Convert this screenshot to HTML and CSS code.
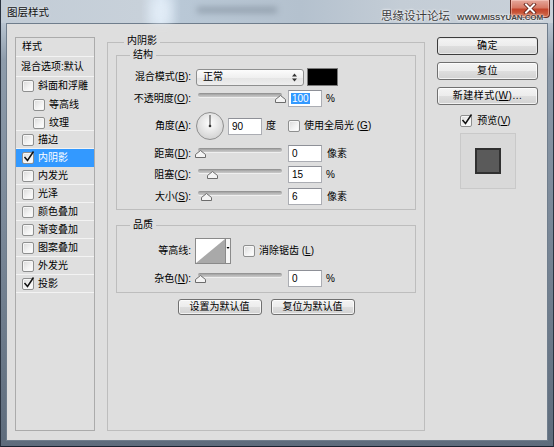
FILE: index.html
```html
<!DOCTYPE html>
<html>
<head>
<meta charset="utf-8">
<title>图层样式</title>
<link rel="stylesheet" href="styles.css">
</head>
<body>
<div class="window">
  <div class="titlebar">
    <span class="title">图层样式</span>
    <span class="glass-glow"></span>
    <span class="glass-blur"></span>
    <span class="close">
      <svg width="14" height="11" viewBox="0 0 14 11"><path d="M3 1.5 L11 9.5 M11 1.5 L3 9.5" stroke="#5b1a12" stroke-width="3.6" stroke-linecap="square"/><path d="M3 1.5 L11 9.5 M11 1.5 L3 9.5" stroke="#fff" stroke-width="2" stroke-linecap="square"/></svg>
    </span>
    <div class="watermark"><span class="wm-cn">思缘设计论坛</span><span class="wm-url">WWW.MISSYUAN.COM</span></div>
  </div>
  <div class="client">
    <div class="stylelist">
      <div class="list-head">样式</div>
      <div class="list-head second">混合选项:默认</div>
      <div class="item nosep"><span class="cb"></span>斜面和浮雕</div>
      <div class="item sub nosep"><span class="cb"></span>等高线</div>
      <div class="item sub"><span class="cb"></span>纹理</div>
      <div class="item"><span class="cb"></span>描边</div>
      <div class="item sel"><span class="cb"><svg class="tick" width="14" height="14" viewBox="0 0 14 14"><path d="M2.5 7 L5.5 10.5 L11.5 1.5" fill="none" stroke="#111" stroke-width="1.5"/></svg></span>内阴影</div>
      <div class="item"><span class="cb"></span>内发光</div>
      <div class="item"><span class="cb"></span>光泽</div>
      <div class="item"><span class="cb"></span>颜色叠加</div>
      <div class="item"><span class="cb"></span>渐变叠加</div>
      <div class="item"><span class="cb"></span>图案叠加</div>
      <div class="item"><span class="cb"></span>外发光</div>
      <div class="item"><span class="cb"><svg class="tick" width="14" height="14" viewBox="0 0 14 14"><path d="M2.5 7 L5.5 10.5 L11.5 1.5" fill="none" stroke="#111" stroke-width="1.5"/></svg></span>投影</div>
    </div>

    <fieldset class="group main">
      <legend>内阴影</legend>
      <fieldset class="group sub structure">
        <legend>结构</legend>
        <div class="row r-blend">
          <span class="lbl">混合模式(<u>B</u>):</span>
          <span class="select">正常
            <svg class="updown" width="5" height="9" viewBox="0 0 5 9"><path d="M0 3.5 L2.5 0.5 L5 3.5 Z M0 5.5 L2.5 8.5 L5 5.5 Z" fill="#333"/></svg>
          </span>
          <span class="swatch"></span>
        </div>
        <div class="row r-opacity">
          <span class="lbl">不透明度(<u>O</u>):</span>
          <span class="slider"><span class="track"></span><svg class="thumb" style="left:79px" width="11" height="8" viewBox="0 0 11 8"><path d="M5.5 0.5 L10.5 4.5 L10.5 7.5 L0.5 7.5 L0.5 4.5 Z" fill="#f4f4f4" stroke="#6c6c6c"/></svg></span>
          <span class="field"><span class="hl">100</span></span>
          <span class="unit pct">%</span>
        </div>
        <div class="row r-angle">
          <span class="lbl">角度(<u>A</u>):</span>
          <svg class="dial" width="28" height="28" viewBox="0 0 28 28">
            <defs><radialGradient id="dg" cx="50%" cy="40%" r="60%"><stop offset="0" stop-color="#ffffff"/><stop offset="1" stop-color="#d2d2d2"/></radialGradient></defs>
            <circle cx="14" cy="14" r="13.5" fill="url(#dg)" stroke="#8f8f8f"/>
            <line x1="14" y1="14" x2="14" y2="3" stroke="#3a3a3a" stroke-width="1"/>
            <circle cx="14" cy="14" r="1.3" fill="#333"/>
          </svg>
          <span class="field angle">90</span>
          <span class="unit deg">度</span>
          <span class="cb gl"></span>
          <span class="cblabel">使用全局光 (<u>G</u>)</span>
        </div>
        <div class="row r-dist">
          <span class="lbl">距离(<u>D</u>):</span>
          <span class="slider"><span class="track"></span><svg class="thumb" style="left:-1px" width="11" height="8" viewBox="0 0 11 8"><path d="M5.5 0.5 L10.5 4.5 L10.5 7.5 L0.5 7.5 L0.5 4.5 Z" fill="#f4f4f4" stroke="#6c6c6c"/></svg></span>
          <span class="field">0</span>
          <span class="unit px">像素</span>
        </div>
        <div class="row r-choke">
          <span class="lbl">阻塞(<u>C</u>):</span>
          <span class="slider"><span class="track"></span><svg class="thumb" style="left:11px" width="11" height="8" viewBox="0 0 11 8"><path d="M5.5 0.5 L10.5 4.5 L10.5 7.5 L0.5 7.5 L0.5 4.5 Z" fill="#f4f4f4" stroke="#6c6c6c"/></svg></span>
          <span class="field">15</span>
          <span class="unit pct">%</span>
        </div>
        <div class="row r-size">
          <span class="lbl">大小(<u>S</u>):</span>
          <span class="slider"><span class="track"></span><svg class="thumb" style="left:5px" width="11" height="8" viewBox="0 0 11 8"><path d="M5.5 0.5 L10.5 4.5 L10.5 7.5 L0.5 7.5 L0.5 4.5 Z" fill="#f4f4f4" stroke="#6c6c6c"/></svg></span>
          <span class="field">6</span>
          <span class="unit px">像素</span>
        </div>
      </fieldset>

      <fieldset class="group sub quality">
        <legend>品质</legend>
        <div class="row r-contour">
          <span class="lbl">等高线:</span>
          <svg class="contour" width="36" height="26" viewBox="0 0 36 26">
            <rect x="0.5" y="0.5" width="30" height="25" fill="#fff" stroke="#8a8a8a"/>
            <path d="M1 25 L30 1 L30 25 Z" fill="#a9a9a9"/>
            <rect x="30.5" y="0.5" width="5" height="25" fill="#f6f6f6" stroke="#8a8a8a"/>
            <path d="M31.5 9 L34.5 9 L33 11 Z" fill="#000"/>
          </svg>
          <span class="cb aa"></span>
          <span class="cblabel">消除锯齿 (<u>L</u>)</span>
        </div>
        <div class="row r-noise">
          <span class="lbl">杂色(<u>N</u>):</span>
          <span class="slider"><span class="track"></span><svg class="thumb" style="left:-1px" width="11" height="8" viewBox="0 0 11 8"><path d="M5.5 0.5 L10.5 4.5 L10.5 7.5 L0.5 7.5 L0.5 4.5 Z" fill="#f4f4f4" stroke="#6c6c6c"/></svg></span>
          <span class="field">0</span>
          <span class="unit pct">%</span>
        </div>
      </fieldset>

      <div class="defaults">
        <span class="btn small">设置为默认值</span>
        <span class="btn small">复位为默认值</span>
      </div>
    </fieldset>

    <div class="side">
      <span class="btn big default">确定</span>
      <span class="btn big">复位</span>
      <span class="btn big">新建样式(<u>W</u>)...</span>
      <div class="preview-check">
        <span class="cb"><svg class="tick" width="14" height="14" viewBox="0 0 14 14"><path d="M2.5 7 L5.5 10.5 L11.5 1.5" fill="none" stroke="#111" stroke-width="1.5"/></svg></span>
        <span class="cblabel">预览(<u>V</u>)</span>
      </div>
      <div class="preview"><span class="preview-swatch"></span></div>
    </div>
  </div>
</div>
</body>
</html>
```

FILE: styles.css
```css
* { box-sizing: border-box; }
html, body { margin: 0; padding: 0; }
body {
  width: 554px;
  height: 447px;
  overflow: hidden;
  font-family: "Liberation Sans", "Noto Sans CJK SC", sans-serif;
  font-size: 10px;
  line-height: 12px;
  color: #000;
  background: #fff;
}
u { text-decoration: underline; text-underline-offset: 1px; }

.window {
  width: 554px;
  height: 447px;
  display: flex;
  flex-direction: column;
  border-left: 1px solid #2a3340;
  border-right: 1px solid #2a3340;
  border-bottom: 1px solid #1a2230;
  background: linear-gradient(to bottom, #c4cdd7 0, #b9c5d1 23px, #8e9cab 60px, #7d8b9b 200px, #5e6c7c 100%);
}

/* title bar */
.titlebar {
  height: 23px;
  flex: none;
  display: flex;
  align-items: flex-start;
  position: relative;
  background: linear-gradient(to right, #c2ccd6 0, #c8d1da 140px, #dae7f4 160px, #b9c8d6 180px, #b4c1ce 300px, #c4cdd6 400px, #c9d1d9 100%);
}
.title {
  padding: 6px 0 0 6px;
  font-size: 10.5px;
  line-height: 12px;
  color: #111;
  text-shadow: 0 0 3px #eef2f6;
}
.glass-glow {
  position: absolute;
  left: 150px;
  top: 0;
  width: 20px;
  height: 23px;
  background: #e4eef8;
  filter: blur(4px);
  opacity: .7;
}
.glass-blur {
  position: absolute;
  left: 196px;
  top: 7px;
  width: 80px;
  height: 6px;
  background: #6f7c8a;
  filter: blur(3px);
  opacity: .5;
}
.close {
  margin-left: auto;
  margin-right: 3px;
  width: 40px;
  height: 18px;
  display: flex;
  align-items: center;
  justify-content: center;
  border: 1px solid #6a2a20;
  border-top: none;
  border-radius: 0 0 4px 4px;
  background: linear-gradient(to bottom, #e6a89c 0, #d77a66 45%, #c4452c 55%, #d06a48 100%);
  box-shadow: inset 0 0 0 1px rgba(255,220,210,.45);
}
.watermark {
  position: absolute;
  right: 10px;
  top: 9px;
  z-index: 2;
  display: flex;
  align-items: baseline;
  gap: 7px;
  line-height: 14px;
  color: #3c3c3c;
  text-shadow: 0 0 2px #fff, 0 0 3px #fff;
  white-space: nowrap;
}
.wm-cn {
  font-size: 11.5px;
}
.wm-url {
  font-size: 8px;
  font-weight: bold;
  color: #444;
  letter-spacing: -0.1px;
}

/* client area */
.client {
  flex: 1;
  margin: 0 5px 6px 5px;
  border: 1px solid #6f7d8c;
  background: #dedede;
  display: flex;
  align-items: flex-start;
  padding: 11px 9px 9px 8px;
}

/* style list */
.stylelist {
  width: 80px;
  height: 394px;
  flex: none;
  margin-top: 2px;
  border: 1px solid #ababab;
  background: #dfdfdf;
}
.list-head {
  height: 19px;
  line-height: 18px;
  padding-left: 6px;
  border-bottom: 1px solid #f3f3f3;
}
.list-head.second {
  height: 20px;
  line-height: 19px;
  padding-left: 5px;
}
.item {
  height: 18px;
  display: flex;
  align-items: center;
  padding-left: 6px;
  border-bottom: 1px solid #f3f3f3;
}
.item.nosep { border-bottom-color: transparent; }
.item.sub { padding-left: 17px; }
.item .cb { margin-right: 4px; }
.item.sel { background: #3399ff; color: #fff; border-bottom-color: #3399ff; }

/* checkbox */
.cb {
  position: relative;
  display: inline-block;
  width: 12px;
  height: 12px;
  flex: none;
  border: 1px solid #8e8f8f;
  border-radius: 2px;
  background: linear-gradient(135deg, #d9d9d9 0, #f4f4f4 60%, #ffffff 100%);
  box-shadow: inset 0 0 0 1px #f6f6f6;
}
.cb .tick {
  position: absolute;
  left: -1px;
  top: -3px;
}

/* fieldsets */
.group {
  margin: 0;
  min-width: 0;
  border: 1px solid #bdbdbd;
}
.group > legend {
  padding: 0 3px;
  line-height: 14px;
}
.main {
  width: 318px;
  height: 396px;
  flex: none;
  margin-left: 12px;
  padding: 0 8px 0 8px;
}
.main > legend {
  margin-left: 8px;
  line-height: 12px;
  padding-bottom: 2px;
}
.sub {
  padding: 6px 0 4px 0;
}
.sub > legend { margin-left: 13px; }
.structure { margin-top: -1px; }
.quality { margin-top: 8px; padding-bottom: 5px; }

/* rows */
.row {
  display: flex;
  align-items: center;
  height: 17px;
}
.lbl {
  width: 74px;
  flex: none;
  margin-right: 5px;
  text-align: right;
  white-space: nowrap;
}
.r-blend { height: 18px; }
.r-opacity { margin-top: 4px; }
.r-angle { margin-top: 5px; height: 28px; }
.r-dist { margin-top: 5px; }
.r-choke { margin-top: 4px; }
.r-size { margin-top: 5px; }
.r-contour { height: 26px; }
.r-contour .lbl { margin-right: 4px; }
.r-noise { margin-top: 6px; }

.select {
  width: 108px;
  height: 17px;
  flex: none;
  display: flex;
  align-items: center;
  justify-content: space-between;
  padding: 0 6px 0 6px;
  border: 1px solid #8e8f8f;
  border-radius: 3px;
  background: linear-gradient(to bottom, #fcfcfc 0, #f0f0f0 50%, #e4e4e4 51%, #eeeeee 100%);
}
.swatch {
  width: 31px;
  height: 18px;
  flex: none;
  margin-left: 3px;
  background: #000;
  border: 1px solid #7a7a7a;
}

.slider {
  position: relative;
  width: 89px;
  height: 17px;
  flex: none;
}
.slider .track {
  position: absolute;
  left: 2px;
  right: 3px;
  top: 3px;
  height: 4px;
  border-radius: 2px;
  background: linear-gradient(to bottom, #8a8a8a 0, #b4b4b4 50%, #c9c9c9 100%);
  box-shadow: 0 1px 0 #efefef;
}
.slider .thumb {
  position: absolute;
  top: 5px;
}

.field {
  width: 34px;
  height: 17px;
  flex: none;
  margin-left: 3px;
  padding: 0 0 0 3px;
  line-height: 15px;
  background: #fff;
  border: 1px solid #abadb3;
  border-top-color: #8e9097;
}
.field.angle { margin-left: 4px; }
.hl {
  background: #3399ff;
  color: #fff;
  padding: 0 1px;
  margin-left: -1px;
}
.unit.pct { margin-left: 4px; }
.unit.px { margin-left: 5px; }
.unit.deg { margin-left: 4px; }
.cb.gl { margin-left: 12px; }
.cb.aa { margin-left: 12px; }
.cblabel { margin-left: 4px; white-space: nowrap; }
.dial { flex: none; }
.contour { flex: none; }

/* buttons */
.btn {
  display: flex;
  align-items: center;
  justify-content: center;
  flex: none;
  border: 1px solid #707070;
  border-radius: 3px;
  background: linear-gradient(to bottom, #f4f4f4 0, #ececec 50%, #dedede 51%, #d2d2d2 100%);
  box-shadow: inset 0 0 0 1px rgba(255,255,255,.7);
  white-space: nowrap;
}
.defaults {
  display: flex;
  justify-content: center;
  gap: 9px;
  margin-top: 6px;
}
.btn.small {
  width: 84px;
  height: 16px;
}
.side {
  width: 101px;
  flex: none;
  margin-left: 12px;
  margin-top: 2px;
  display: flex;
  flex-direction: column;
  align-items: center;
}
.btn.big {
  width: 101px;
  height: 18px;
  margin-bottom: 7px;
  letter-spacing: 0.5px;
}
.btn.default {
  border-color: #3c3c3c;
  box-shadow: inset 0 0 0 1px #e8e8e8;
}
.preview-check {
  display: flex;
  align-items: center;
  margin-top: 2px;
  height: 13px;
  padding-right: 4px;
}
.preview-check .cblabel { margin-left: 5px; }
.preview {
  width: 56px;
  height: 56px;
  margin-top: 6px;
  border: 1px solid #c9c9c9;
  background: #d9d9d9;
  display: flex;
  align-items: center;
  justify-content: center;
}
.preview-swatch {
  width: 26px;
  height: 26px;
  background: #5a5a5a;
  border: 2px solid #303030;
}
```
